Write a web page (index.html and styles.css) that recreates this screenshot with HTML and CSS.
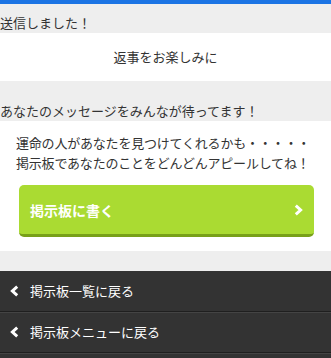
FILE: index.html
```html
<!DOCTYPE html>
<html lang="ja">
<head>
<meta charset="utf-8">
<link rel="stylesheet" href="styles.css">
</head>
<body>
<div class="topbar"></div>
<h2 class="heading">送信しました！</h2>
<div class="box box-center">返事をお楽しみに</div>
<h2 class="heading heading-gap">あなたのメッセージをみんなが待ってます！</h2>
<div class="box box-promo">
  <p class="promo-text">運命の人があなたを見つけてくれるかも・・・・・<br>掲示板であなたのことをどんどんアピールしてね！</p>
  <a class="btn" href="#">
    <span>掲示板に書く</span>
    <svg class="btn-chev" width="9" height="12" viewBox="0 0 9 12"><polyline points="1.8,1.6 6.6,6 1.8,10.4" fill="none" stroke="#fff" stroke-width="3"/></svg>
  </a>
</div>
<nav class="menu">
  <a class="menu-item" href="#">
    <svg class="menu-chev" width="9" height="12" viewBox="0 0 9 12"><polyline points="7.2,1.6 2.4,6 7.2,10.4" fill="none" stroke="#fff" stroke-width="3"/></svg>
    <span>掲示板一覧に戻る</span>
  </a>
  <a class="menu-item" href="#">
    <svg class="menu-chev" width="9" height="12" viewBox="0 0 9 12"><polyline points="7.2,1.6 2.4,6 7.2,10.4" fill="none" stroke="#fff" stroke-width="3"/></svg>
    <span>掲示板メニューに戻る</span>
  </a>
</nav>
</body>
</html>
```
FILE: styles.css
```css
html, body {
  margin: 0;
  padding: 0;
}
body {
  background: #eeeeee;
  font-family: "Noto Sans CJK JP", "Noto Sans", sans-serif;
  font-size: 13px;
  color: #333;
  height: 358px;
  overflow: hidden;
}
.topbar {
  height: 4px;
  background: #1b74e4;
}
.heading {
  margin: 0;
  font-size: 13px;
  font-weight: normal;
  line-height: 15px;
  padding: 11px 0 3px 0;
  color: #333;
}
.heading-gap {
  margin-top: 11px;
}
.box {
  background: #fff;
}
.box-center {
  height: 48px;
  line-height: 48px;
  text-align: center;
}
.box-promo {
  padding: 12px 17px 14px 19px;
}
.promo-text {
  margin: 0 0 12px -3px;
  line-height: 20px;
  letter-spacing: -0.2px;
  white-space: nowrap;
}
.btn {
  display: flex;
  align-items: center;
  justify-content: space-between;
  height: 49px;
  padding: 0 11px 0 11px;
  background: #aadb32;
  border-bottom: 3px solid #78a019;
  border-radius: 5px;
  color: #fff;
  font-weight: bold;
  font-size: 14px;
  text-decoration: none;
}
.btn-chev {
  display: block;
}
.menu {
  margin-top: 20px;
  background: #333;
  height: 87px;
}
.menu-item {
  display: flex;
  align-items: center;
  gap: 11px;
  height: 38px;
  padding: 0 0 2px 10px;
  border-bottom: 1px solid #1f1f1f;
  box-shadow: 0 1px 0 #444;
  color: #fff;
  text-decoration: none;
  font-size: 13px;
}
.menu-chev {
  display: block;
  margin-top: 1px;
}
```
